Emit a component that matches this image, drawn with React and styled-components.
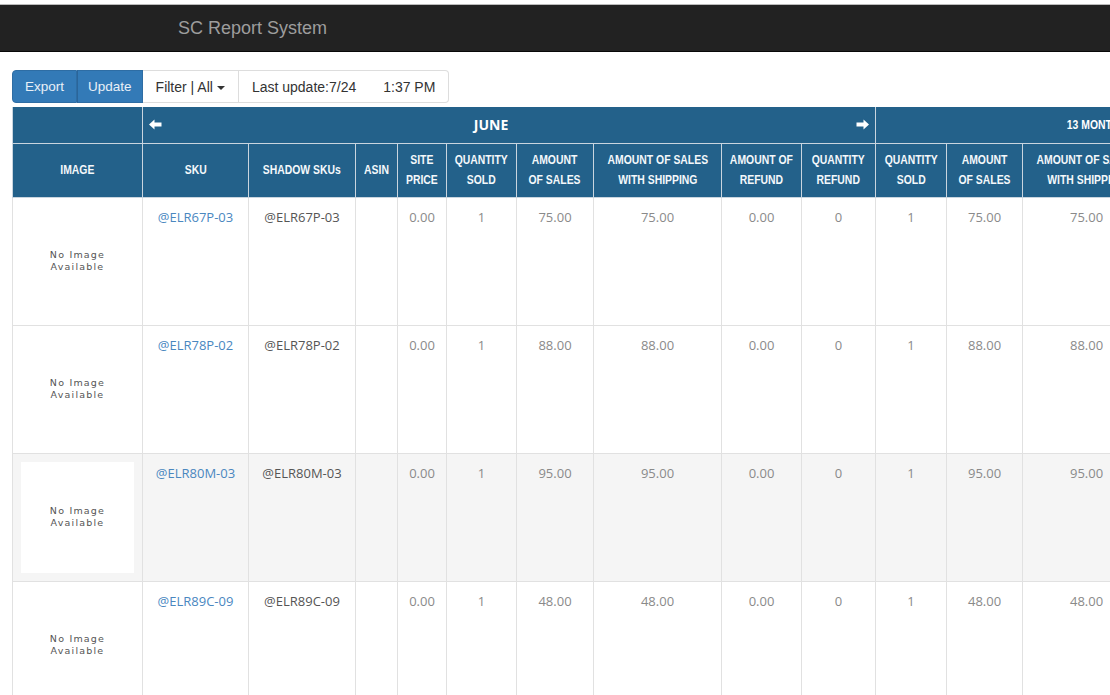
import React from "react";
import styled, { createGlobalStyle } from "styled-components";

const Global = createGlobalStyle`
  html, body { margin: 0; padding: 0; overflow: hidden; background: #fff; }
  body { font-family: "Liberation Sans", Arial, sans-serif; font-size: 14px; color: #333; }
  * { box-sizing: border-box; }
`;

const Page = styled.div`
  width: 1110px;
  height: 695px;
  overflow: hidden;
  padding-top: 4px;
  background: #fff;
`;

const Navbar = styled.header`
  height: 48px;
  background: #222;
  border-top: 1px solid #bbb;
  border-bottom: 1px solid #080808;
  display: flex;
  align-items: center;
  padding-left: 178px;
`;

const Brand = styled.span`
  font-family: "Liberation Sans", Arial, sans-serif;
  font-size: 18px;
  color: #9d9d9d;
`;

const Content = styled.main`
  padding: 18px 0 0 12px;
`;

const Toolbar = styled.div`
  display: inline-flex;
  height: 33px;
  margin-bottom: 4px;
`;

const BlueBtn = styled.button`
  height: 33px;
  padding: 0 ${(p) => p.$px}px;
  background: #337ab7;
  border: 1px solid #2e6da4;
  border-left: ${(p) => (p.$first ? "1px solid #2e6da4" : "1px solid #2a659a")};
  color: #e9f0f7;
  font-family: "Liberation Sans", Arial, sans-serif;
  font-size: 13.5px;
  border-radius: ${(p) => (p.$first ? "4px 0 0 4px" : "0")};
  cursor: pointer;
`;

const WhiteBtn = styled.div`
  height: 33px;
  display: flex;
  align-items: center;
  gap: ${(p) => p.$gap || 0}px;
  padding: 0 ${(p) => p.$px}px;
  background: #fff;
  border: 1px solid #ddd;
  border-left: ${(p) => (p.$noLeft ? "none" : "1px solid #ddd")};
  color: #333;
  font-family: "Liberation Sans", Arial, sans-serif;
  font-size: 14px;
  border-radius: ${(p) => (p.$last ? "0 4px 4px 0" : "0")};
`;

const Caret = styled.span`
  display: inline-block;
  width: 0;
  height: 0;
  margin-left: 4px;
  margin-top: 2px;
  border-top: 4px solid #333;
  border-left: 4px solid transparent;
  border-right: 4px solid transparent;
`;

const Table = styled.table`
  table-layout: fixed;
  border-collapse: collapse;
  width: 1292px;
`;

const HeadRow = styled.tr`
  background: #23618a;
  height: ${(p) => p.$h}px;
`;

const Th = styled.th`
  border: 1px solid #c9d5df;
  border-top: none;
  color: #f4f8fb;
  font-family: "Liberation Sans", Arial, sans-serif;
  font-weight: bold;
  font-size: 13px;
  line-height: 20px;
  text-align: center;
  vertical-align: middle;
  padding: 0;
  white-space: nowrap;
  overflow: hidden;
`;

const Narrow = styled.span`
  display: inline-block;
  transform: scaleX(0.8);
  transform-origin: center;
  margin: 0 -20px;
`;

const MonthCell = styled.div`
  display: flex;
  align-items: center;
  justify-content: space-between;
  padding: 0 ${(p) => p.$pad}px;
`;

const MonthName = styled.span`
  font-family: "Open Sans", "Liberation Sans", sans-serif;
  font-weight: bold;
  font-size: 14px;
  color: #fff;
  margin-right: ${(p) => p.$shift}px;
`;

const MonthSmall = styled(Narrow)`
  padding-left: 16px;
  color: #fff;
`;

const Row = styled.tr`
  background: ${(p) => (p.$hover ? "#f5f5f5" : "#fff")};
`;

const Td = styled.td`
  border: 1px solid #e1e1e1;
  padding: 8px 4px;
  text-align: center;
  vertical-align: top;
  font-family: "Open Sans", "Liberation Sans", sans-serif;
  font-size: 13px;
  line-height: 22px;
  color: ${(p) => p.$color || "#8a8a8a"};
  white-space: nowrap;
  overflow: hidden;
`;

const ImgTd = styled(Td)`
  padding: 8px;
  vertical-align: middle;
`;

const NoImage = styled.div`
  height: 111px;
  background: #fff;
  display: flex;
  align-items: center;
  justify-content: center;
  text-align: center;
  font-family: "DejaVu Sans", Verdana, sans-serif;
  font-size: 9.5px;
  letter-spacing: 1.2px;
  line-height: 12px;
  color: #555;
  white-space: normal;
`;

const SkuLink = styled.a`
  color: #4a87bf;
  text-decoration: none;
`;

const Arrow = ({ dir }) => (
  <svg width="13" height="11" viewBox="0 0 13 11" style={{ display: "block" }}>
    <path
      d="M0 5.5 L5.5 0.5 L5.5 3.5 L12.5 3.5 L12.5 7.5 L5.5 7.5 L5.5 10.5 Z"
      fill="#fff"
      transform={dir === "right" ? "translate(13 0) scale(-1 1)" : undefined}
    />
  </svg>
);

const widths = [130, 106, 107, 42, 49, 70, 77, 128, 80, 74, 71, 76, 128, 80, 74];

const metricHeads = [
  ["QUANTITY", "SOLD"],
  ["AMOUNT", "OF SALES"],
  ["AMOUNT OF SALES", "WITH SHIPPING"],
  ["AMOUNT OF", "REFUND"],
  ["QUANTITY", "REFUND"],
];

const rows = [
  { sku: "@ELR67P-03", amt: "75.00" },
  { sku: "@ELR78P-02", amt: "88.00" },
  { sku: "@ELR80M-03", amt: "95.00", hover: true },
  { sku: "@ELR89C-09", amt: "48.00" },
];

const HeadText = ({ a, b }) => (
  <Narrow>
    {a}
    {b && (
      <>
        <br />
        {b}
      </>
    )}
  </Narrow>
);

export default function App() {
  return (
    <Page>
      <Global />
      <Navbar>
        <Brand>SC Report System</Brand>
      </Navbar>
      <Content>
        <Toolbar>
          <BlueBtn $first $px={12}>Export</BlueBtn>
          <BlueBtn $px={10}>Update</BlueBtn>
          <WhiteBtn $px={13} $noLeft>
            Filter | All <Caret />
          </WhiteBtn>
          <WhiteBtn $px={13} $noLeft $last $gap={27}>
            <span>Last update:7/24</span>
            <span>1:37 PM</span>
          </WhiteBtn>
        </Toolbar>
        <Table>
          <colgroup>
            {widths.map((w, i) => (
              <col key={i} style={{ width: w }} />
            ))}
          </colgroup>
          <thead>
            <HeadRow $h={36}>
              <Th />
              <Th colSpan={9}>
                <MonthCell $pad={6}>
                  <Arrow dir="left" />
                  <MonthName $shift={36}>JUNE</MonthName>
                  <Arrow dir="right" />
                </MonthCell>
              </Th>
              <Th colSpan={5}>
                <MonthSmall>13 MONTHS</MonthSmall>
              </Th>
            </HeadRow>
            <HeadRow $h={54}>
              <Th><HeadText a="IMAGE" /></Th>
              <Th><HeadText a="SKU" /></Th>
              <Th><HeadText a="SHADOW SKUs" /></Th>
              <Th><HeadText a="ASIN" /></Th>
              <Th><HeadText a="SITE" b="PRICE" /></Th>
              {metricHeads.map(([a, b], i) => (
                <Th key={"j" + i}>
                  <HeadText a={a} b={b} />
                </Th>
              ))}
              {metricHeads.map(([a, b], i) => (
                <Th key={"m" + i}>
                  <HeadText a={a} b={b} />
                </Th>
              ))}
            </HeadRow>
          </thead>
          <tbody>
            {rows.map((r) => (
              <Row key={r.sku} $hover={r.hover}>
                <ImgTd>
                  <NoImage>
                    No Image
                    <br />
                    Available
                  </NoImage>
                </ImgTd>
                <Td>
                  <SkuLink href="#">{r.sku}</SkuLink>
                </Td>
                <Td $color="#555">{r.sku}</Td>
                <Td />
                <Td>0.00</Td>
                <Td>1</Td>
                <Td>{r.amt}</Td>
                <Td>{r.amt}</Td>
                <Td>0.00</Td>
                <Td>0</Td>
                <Td>1</Td>
                <Td>{r.amt}</Td>
                <Td>{r.amt}</Td>
                <Td>0.00</Td>
                <Td>0</Td>
              </Row>
            ))}
          </tbody>
        </Table>
      </Content>
    </Page>
  );
}
